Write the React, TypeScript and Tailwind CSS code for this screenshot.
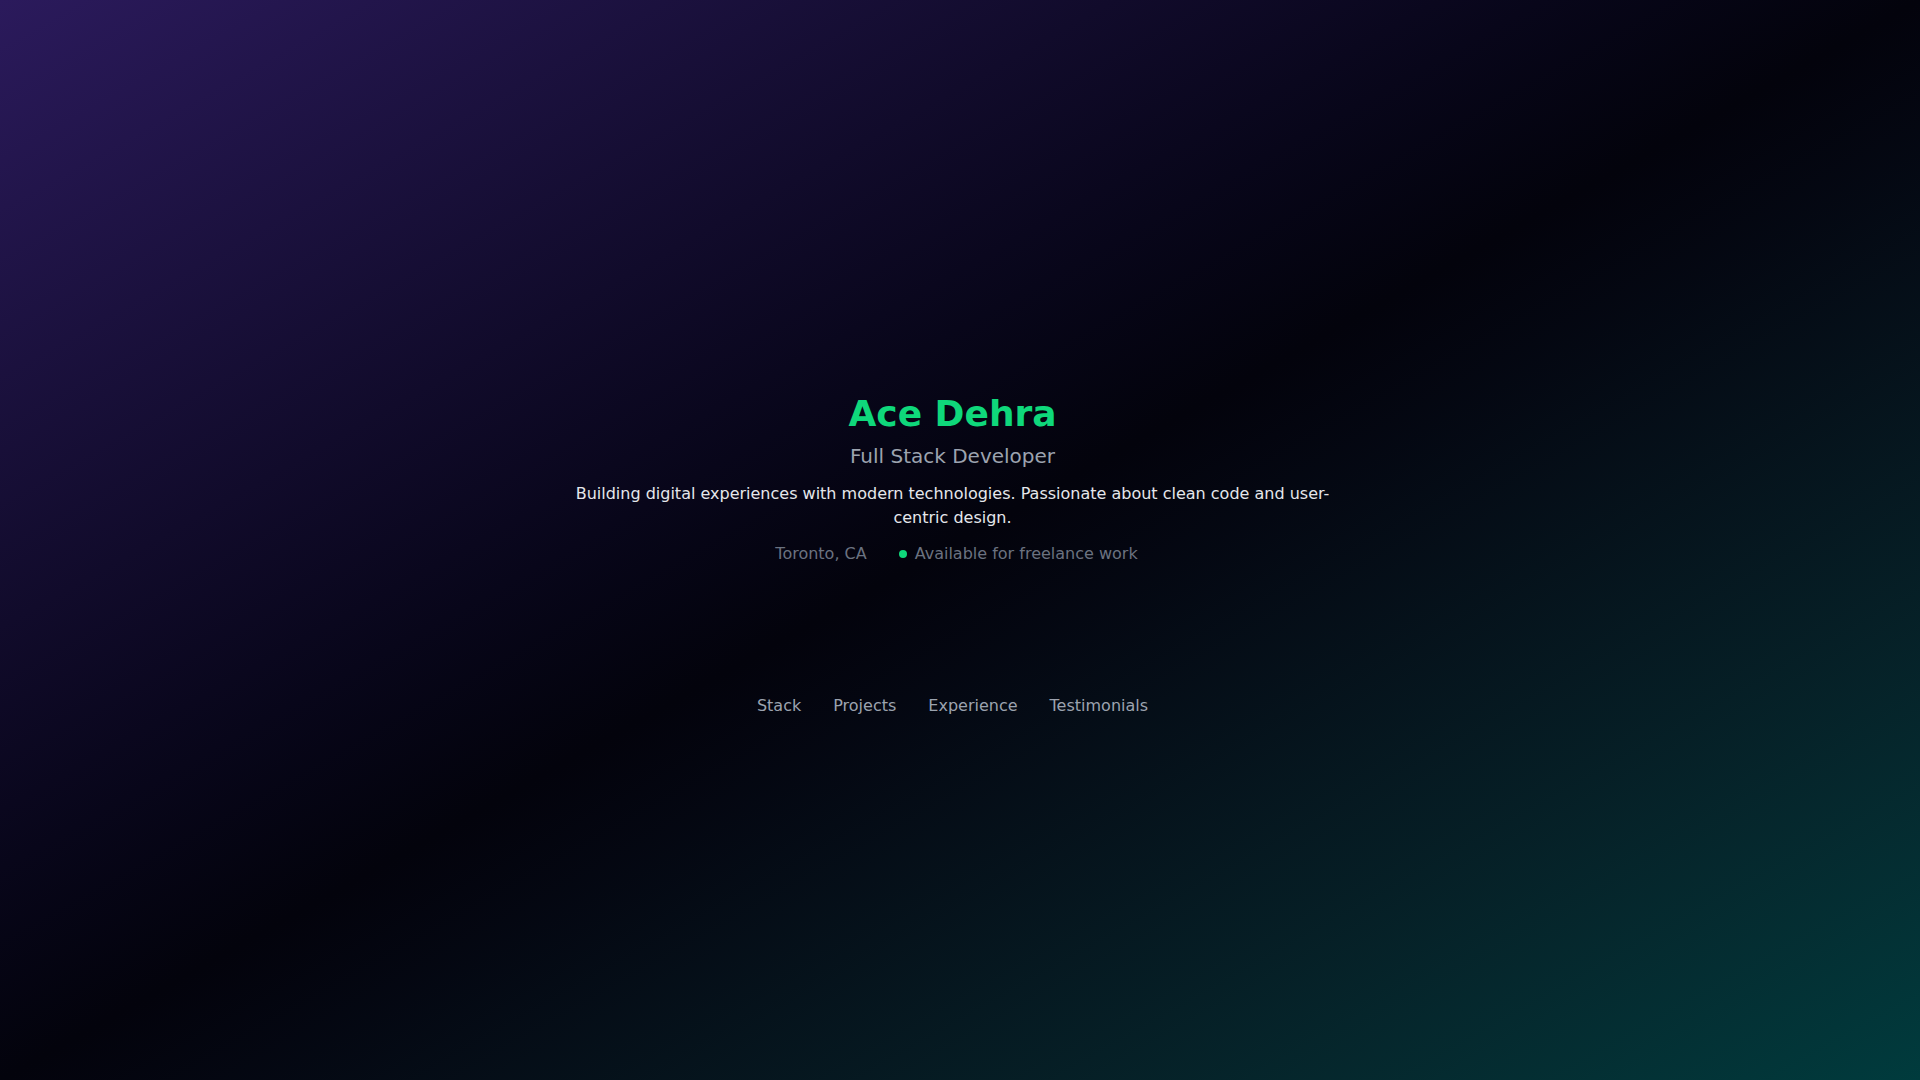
import React from 'react';

const navItems = ['Stack', 'Projects', 'Experience', 'Testimonials'];

export default function App() {
  return (
    <div className="h-screen overflow-y-scroll bg-gradient-to-br from-[#2b1a5c] via-[#03030c] to-[#003b3d] pr-[15px] font-['DejaVu_Sans',sans-serif] text-white">
      {/* Hero */}
      <header className="flex flex-col items-center px-4 pt-[394px] text-center">
        <h1 className="text-4xl font-bold text-[#0fd87b]">Ace Dehra</h1>
        <p className="mt-2 text-xl text-[#9ca3af]">Full Stack Developer</p>
        <p className="mt-3 max-w-3xl text-base text-gray-200">
          Building digital experiences with modern technologies. Passionate about clean code and user-centric design.
        </p>
        <div className="mt-3 ml-2 flex items-center gap-8 text-base text-[#6b7280]">
          <span>Toronto, CA</span>
          <span className="flex items-center gap-2">
            <span className="h-2 w-2 rounded-full bg-[#0fd87b]" />
            Available for freelance work
          </span>
        </div>
      </header>

      {/* Section nav */}
      <nav className="mt-32 flex items-center justify-center gap-8 text-base text-[#9ca3af]">
        {navItems.map((item) => (
          <a key={item} href={`#${item.toLowerCase()}`} className="hover:text-white transition-colors">
            {item}
          </a>
        ))}
      </nav>

      <main className="mx-auto flex max-w-5xl flex-col">
        {navItems.map((item) => (
          <section key={item} id={item.toLowerCase()} className="h-[478px]" />
        ))}
      </main>
    </div>
  );
}
